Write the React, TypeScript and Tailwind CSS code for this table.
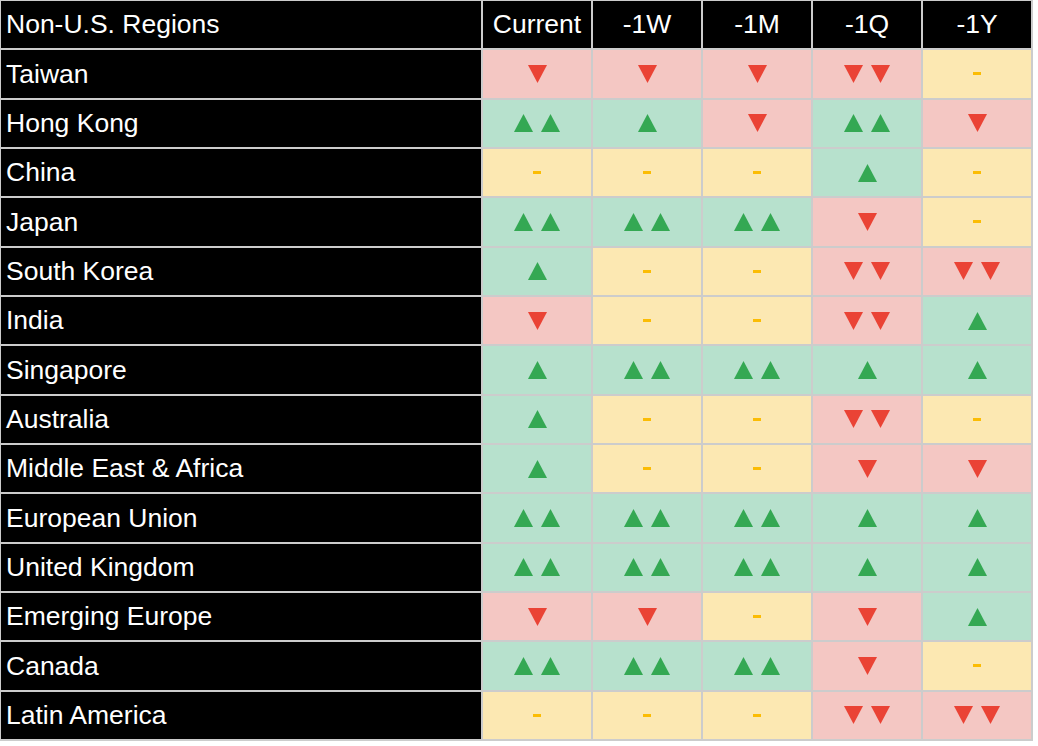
import React from 'react';

type Signal = 'u' | 'uu' | 'd' | 'dd' | 'n';

const PERIODS = ['Current', '-1W', '-1M', '-1Q', '-1Y'];

const ROWS: [string, Signal[]][] = [
  ['Taiwan',               ['d',  'd',  'd',  'dd', 'n' ]],
  ['Hong Kong',            ['uu', 'u',  'd',  'uu', 'd' ]],
  ['China',                ['n',  'n',  'n',  'u',  'n' ]],
  ['Japan',                ['uu', 'uu', 'uu', 'd',  'n' ]],
  ['South Korea',          ['u',  'n',  'n',  'dd', 'dd']],
  ['India',                ['d',  'n',  'n',  'dd', 'u' ]],
  ['Singapore',            ['u',  'uu', 'uu', 'u',  'u' ]],
  ['Australia',            ['u',  'n',  'n',  'dd', 'n' ]],
  ['Middle East & Africa', ['u',  'n',  'n',  'd',  'd' ]],
  ['European Union',       ['uu', 'uu', 'uu', 'u',  'u' ]],
  ['United Kingdom',       ['uu', 'uu', 'uu', 'u',  'u' ]],
  ['Emerging Europe',      ['d',  'd',  'n',  'd',  'u' ]],
  ['Canada',               ['uu', 'uu', 'uu', 'd',  'n' ]],
  ['Latin America',        ['n',  'n',  'n',  'dd', 'dd']],
];

const font = 'font-["Liberation_Sans",Arial,sans-serif]';

function Up() {
  return (
    <svg width="19" height="18" viewBox="0 0 19 18" className="block">
      <polygon points="9.5,0 19,18 0,18" fill="#34a853" />
    </svg>
  );
}

function Down() {
  return (
    <svg width="19" height="18" viewBox="0 0 19 18" className="block">
      <polygon points="0,0 19,0 9.5,18" fill="#ea4335" />
    </svg>
  );
}

function SignalCell({ s }: { s: Signal }) {
  const bg = s === 'u' || s === 'uu' ? 'bg-[#b7e1cd]'
           : s === 'd' || s === 'dd' ? 'bg-[#f4c7c3]'
           : 'bg-[#fce8b2]';
  return (
    <div className={`${bg} flex items-center justify-center gap-[8px]`}>
      {s === 'u'  && <Up />}
      {s === 'uu' && (<><Up /><Up /></>)}
      {s === 'd'  && <Down />}
      {s === 'dd' && (<><Down /><Down /></>)}
      {s === 'n'  && <span className="block h-[3px] w-[8px] bg-[#fbbc04]" />}
    </div>
  );
}

export default function App() {
  return (
    <div className="min-h-[746px] bg-white">
      <div
        className={`${font} grid h-[741px] w-[1033px] grid-cols-[480px_repeat(5,1fr)] grid-rows-[repeat(15,1fr)] gap-[2px] bg-[#cccccc] pt-[1px] pl-[1px] pr-[2px] pb-[2px] text-[26.5px] leading-none text-white`}
      >
        {/* header */}
        <div className="flex items-center bg-black pl-[5px]">Non-U.S. Regions</div>
        {PERIODS.map((p) => (
          <div key={p} className="flex items-center justify-center bg-black">{p}</div>
        ))}

        {ROWS.map(([name, signals]) => (
          <React.Fragment key={name}>
            <div className="flex items-center bg-black pl-[5px]">{name}</div>
            {signals.map((s, i) => (
              <SignalCell key={i} s={s} />
            ))}
          </React.Fragment>
        ))}
      </div>
    </div>
  );
}
